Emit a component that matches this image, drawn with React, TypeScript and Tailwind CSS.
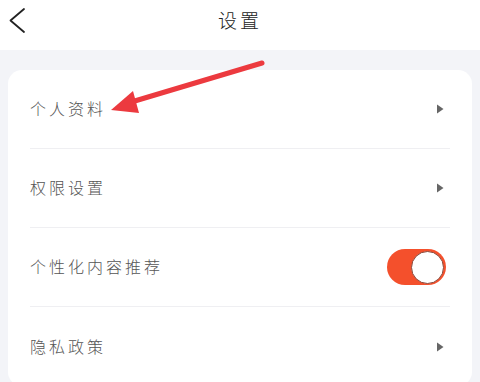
const rows = [
  { label: "个人资料", type: "link" },
  { label: "权限设置", type: "link" },
  { label: "个性化内容推荐", type: "toggle" },
  { label: "隐私政策", type: "link" },
];

function Caret() {
  return (
    <svg width="8" height="10" viewBox="0 0 8 10" className="mr-[6px]">
      <path d="M1 0.5 L7.5 5 L1 9.5 Z" fill="#666" />
    </svg>
  );
}

function Toggle() {
  return (
    <div className="mr-[4px] flex h-[36px] w-[59px] items-center justify-end rounded-full bg-[#f4502c] p-[2px]">
      <div className="h-[33px] w-[33px] rounded-full border border-[#8a4a3c] bg-white" />
    </div>
  );
}

export default function App() {
  return (
    <div
      className="relative h-[382px] w-[480px] overflow-hidden bg-[#f3f4f8]"
      style={{ fontFamily: '"Noto Sans CJK SC", "Noto Sans", sans-serif' }}
    >
      <header className="relative flex h-[50px] items-center justify-center bg-white">
        <svg className="absolute left-0 top-0" width="34" height="40" viewBox="0 0 34 40">
          <polyline points="24,9 10.5,20.5 24,32" fill="none" stroke="#222" strokeWidth="1.8" strokeLinecap="round" strokeLinejoin="round" />
        </svg>
        <h1 className="mt-[-10px] text-[19px] font-light tracking-[3px] text-[#222]">设置</h1>
      </header>

      <main className="px-[8px] pt-[20px]">
        <div className="rounded-[14px] bg-white px-[22px]">
          {rows.map((row, i) => (
            <div
              key={row.label}
              className={`flex h-[79px] items-center justify-between ${i < rows.length - 1 ? "border-b border-[#efeff2]" : ""}`}
            >
              <span className="mt-[-2px] text-[16px] font-light tracking-[3px] text-[#555]">{row.label}</span>
              {row.type === "toggle" ? <Toggle /> : <Caret />}
            </div>
          ))}
        </div>
      </main>

      <svg className="pointer-events-none absolute left-0 top-0" width="480" height="382">
        <line x1="262" y1="63" x2="128" y2="103" stroke="#ec3a3f" strokeWidth="5" strokeLinecap="round" />
        <polygon points="111,110 133,91 139,113" fill="#ec3a3f" />
      </svg>
    </div>
  );
}
